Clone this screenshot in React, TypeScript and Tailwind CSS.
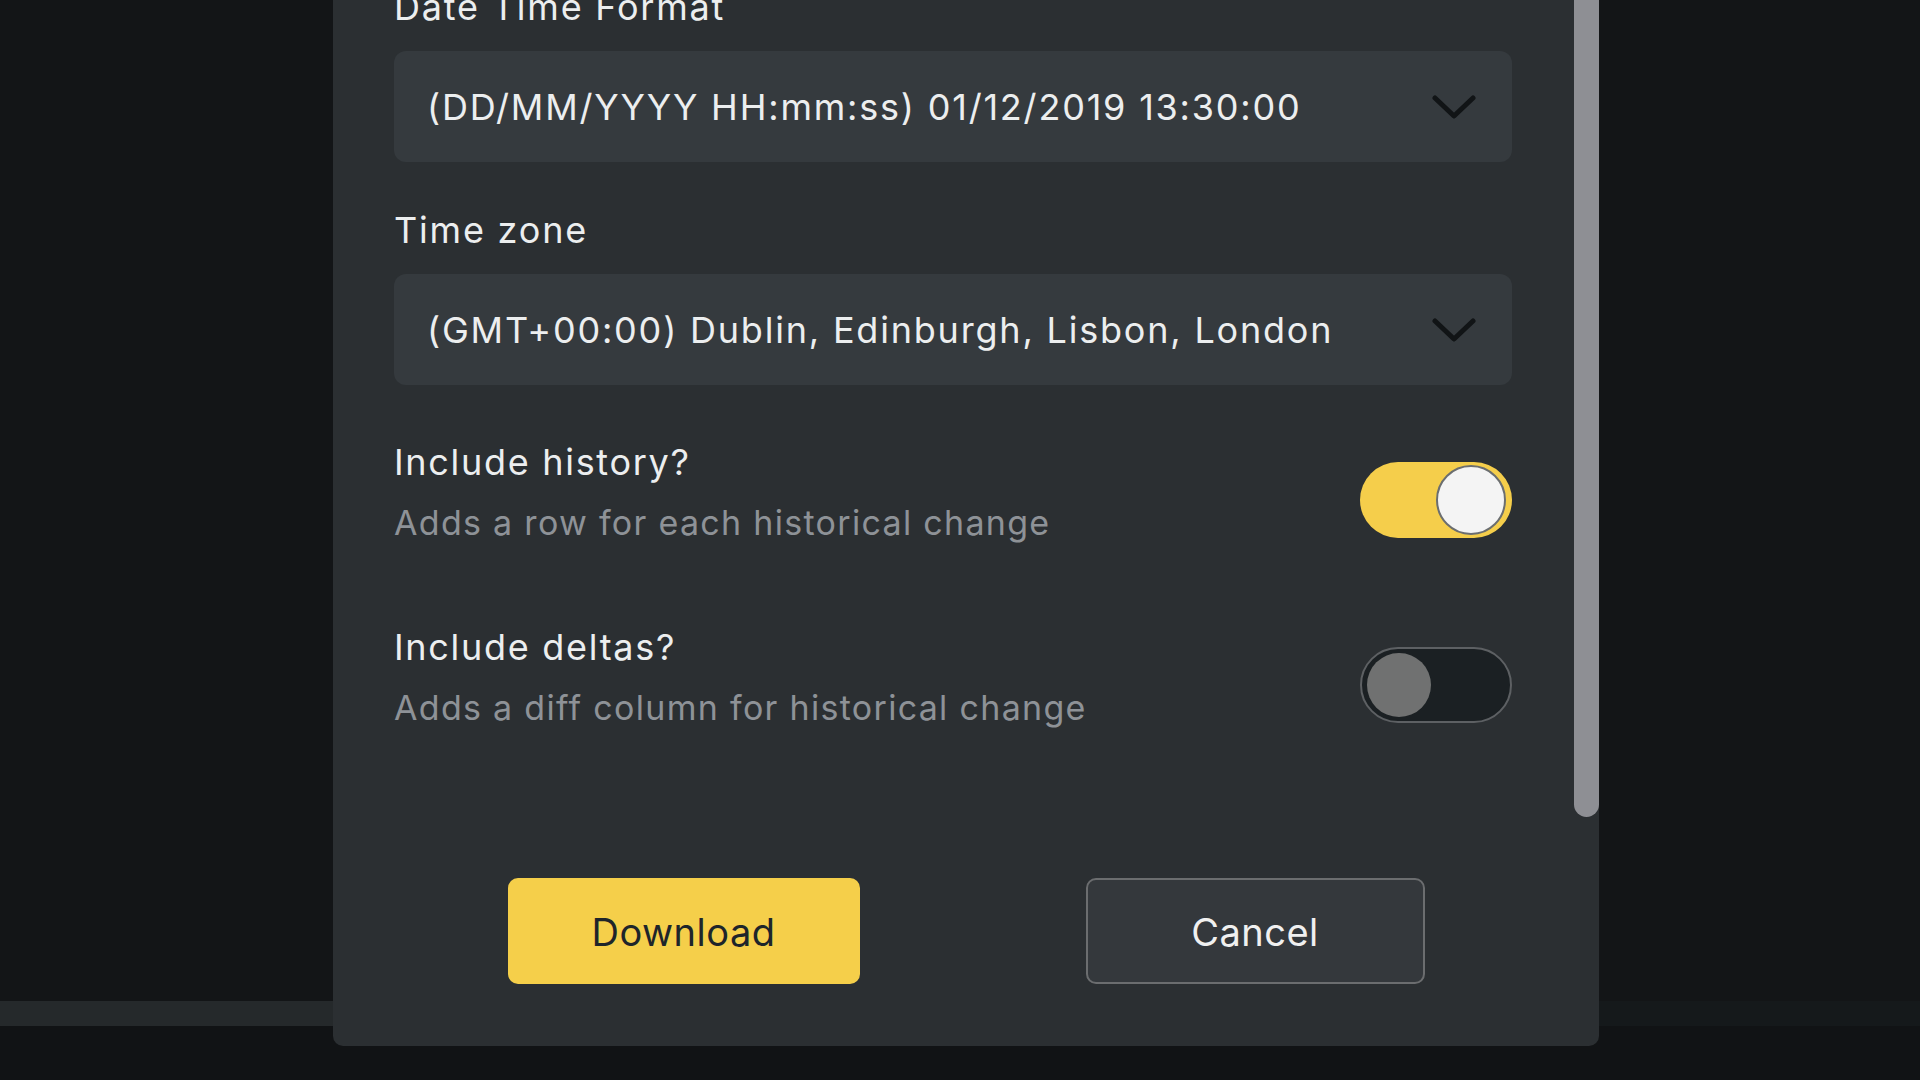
import { useState } from "react";

function Chevron() {
  return (
    <svg width="44" height="26" viewBox="0 0 44 26" fill="none">
      <path d="M3 4 L22 22 L41 4" stroke="#111416" strokeWidth="5" strokeLinecap="round" strokeLinejoin="round" />
    </svg>
  );
}

function SelectBox({ value }: { value: string }) {
  return (
    <div className="flex h-[111px] items-center justify-between rounded-[12px] bg-[#353a3e] pl-[33px] pr-[36px]">
      <span className="text-[36px] tracking-[1.8px] text-[#eceeef]">{value}</span>
      <Chevron />
    </div>
  );
}

function Toggle({ on, onChange }: { on: boolean; onChange: () => void }) {
  if (on) {
    return (
      <button
        onClick={onChange}
        className="mt-[22px] flex h-[76px] w-[152px] shrink-0 items-center justify-end rounded-full bg-[#f5ce4b] pr-[6px]"
      >
        <span className="h-[70px] w-[70px] rounded-full border-2 border-[#6b6e70] bg-[#f4f4f4]" />
      </button>
    );
  }
  return (
    <button
      onClick={onChange}
      className="mt-[22px] flex h-[76px] w-[152px] shrink-0 items-center justify-start rounded-full border-2 border-[#5d6063] bg-[#1b2023] pl-[5px]"
    >
      <span className="h-[64px] w-[64px] rounded-full bg-[#707171]" />
    </button>
  );
}

export default function App() {
  const [history, setHistory] = useState(true);
  const [deltas, setDeltas] = useState(false);

  return (
    <div
      className="relative h-[1080px] w-full overflow-hidden bg-[#131517]"
      style={{ fontFamily: "Inter, 'Noto Sans', sans-serif" }}
    >
      {/* page behind the dialog */}
      <div className="flex h-full flex-col">
        <div className="h-[1001px]" />
        <div className="flex h-[25px]">
          <div className="w-[333px] bg-[#25292b]" />
          <div className="flex-1 bg-[#15191b]" />
        </div>
        <div className="flex-1 bg-[#111315]" />
      </div>

      {/* dialog */}
      <div className="absolute left-[333px] top-[-60px] bottom-[34px] flex w-[1266px] flex-col rounded-[10px] bg-[#2b2f32]">
        <div className="flex flex-1 overflow-hidden">
          <div className="w-[1118px] shrink-0 pl-[61px] box-content pt-[45px]">
            <div className="text-[36px] leading-[44px] tracking-[1.8px] text-[#eceeef]">Date Time Format</div>
            <div className="mt-[22px]">
              <SelectBox value="(DD/MM/YYYY HH:mm:ss) 01/12/2019 13:30:00" />
            </div>

            <div className="mt-[46px] text-[36px] leading-[44px] tracking-[1.8px] text-[#eceeef]">Time zone</div>
            <div className="mt-[22px]">
              <SelectBox value="(GMT+00:00) Dublin, Edinburgh, Lisbon, London" />
            </div>

            <div className="mt-[55px] flex items-start justify-between">
              <div className="flex flex-col gap-[17px]">
                <span className="text-[36px] leading-[44px] tracking-[1.7px] text-[#eceeef]">Include history?</span>
                <span className="text-[34px] leading-[44px] tracking-[1.3px] text-[#8e9297]">
                  Adds a row for each historical change
                </span>
              </div>
              <Toggle on={history} onChange={() => setHistory(!history)} />
            </div>

            <div className="mt-[80px] flex items-start justify-between">
              <div className="flex flex-col gap-[17px]">
                <span className="text-[36px] leading-[44px] tracking-[1.7px] text-[#eceeef]">Include deltas?</span>
                <span className="text-[34px] leading-[44px] tracking-[1.3px] text-[#8e9297]">
                  Adds a diff column for historical change
                </span>
              </div>
              <Toggle on={deltas} onChange={() => setDeltas(!deltas)} />
            </div>
          </div>
          <div className="ml-[62px] w-[25px] shrink-0 rounded-full bg-[#8e8f94]" />
        </div>

        <div className="flex h-[229px] shrink-0 items-start justify-center gap-[226px] pt-[61px]">
          <button className="h-[106px] w-[352px] rounded-[10px] bg-[#f5cf4a] pt-[3px] text-[38px] tracking-[0.5px] text-[#1e252a]">
            Download
          </button>
          <button className="h-[106px] w-[339px] rounded-[10px] border-2 border-[#6b6d6f] bg-[#34383c] pt-[3px] text-[38px] tracking-[0.5px] text-[#f0f0f0]">
            Cancel
          </button>
        </div>
      </div>
    </div>
  );
}
